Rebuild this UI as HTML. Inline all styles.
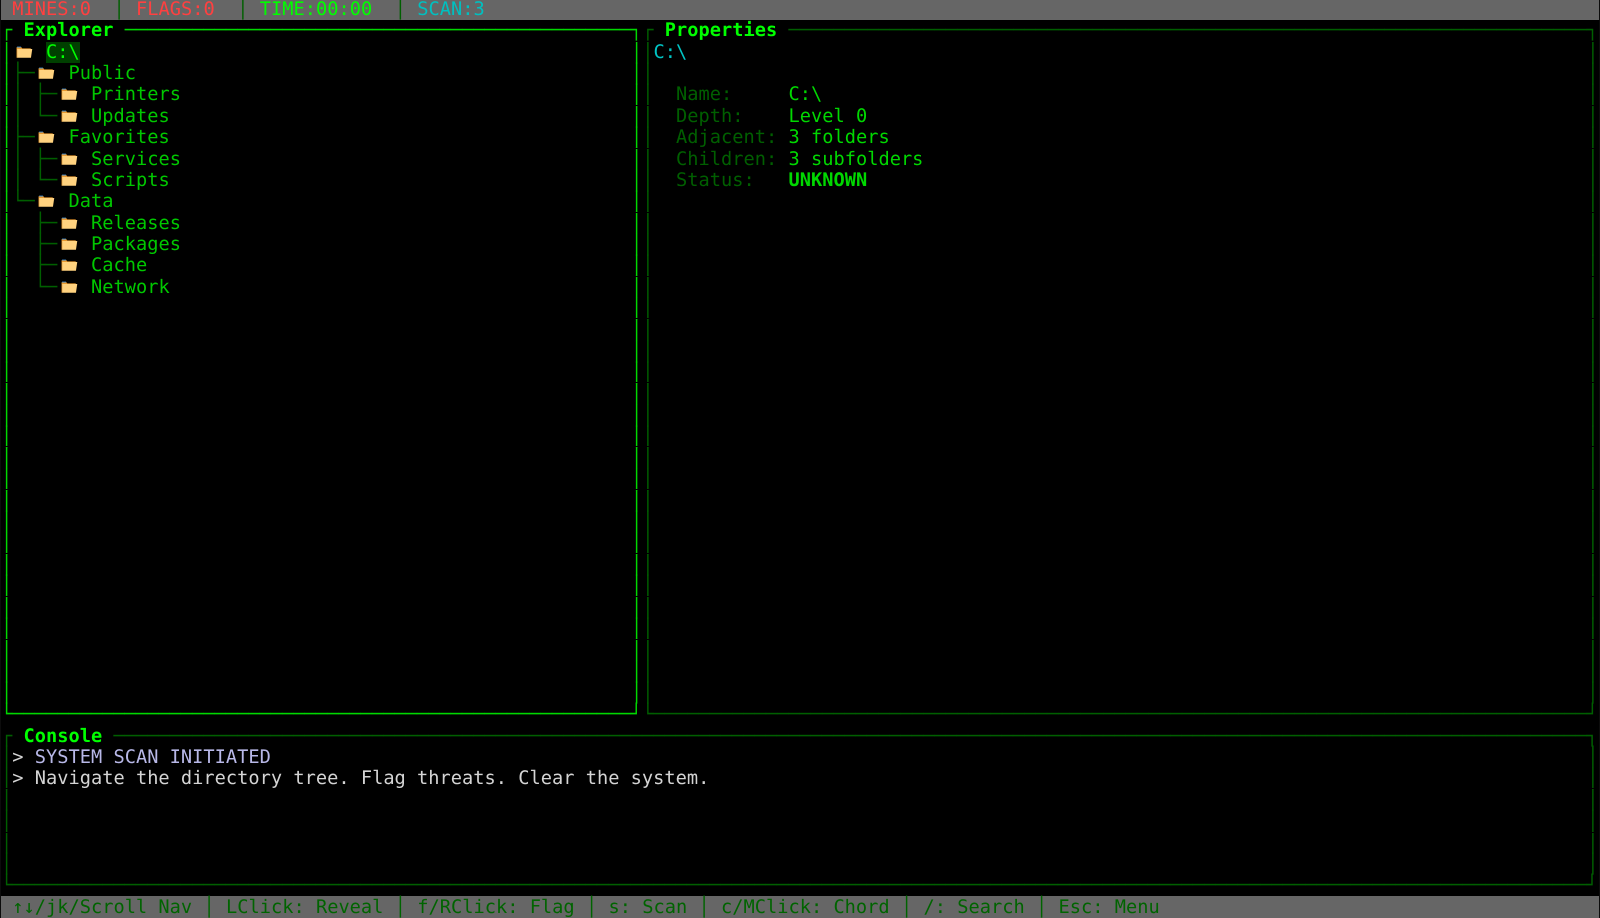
<!DOCTYPE html>
<html lang="en">
<head>
<meta charset="utf-8">
<title>Explorer</title>
<style>
html,body{margin:0;padding:0;width:1600px;height:918px;overflow:hidden;background:#0c0c0c}
#t{position:absolute;left:1px;top:0;width:1598px;height:918px;background:#000;overflow:hidden;font-family:"DejaVu Sans Mono","Liberation Mono",monospace;font-size:18.667px;line-height:21.35px;letter-spacing:.012px;white-space:pre;font-variant-ligatures:none;text-rendering:geometricPrecision}
#t span,#t div.c{position:absolute;left:calc(var(--c)*11.25px);top:calc(var(--r)*21.35px);height:21.35px}
#t div.c{height:auto}
#t span.u{margin-top:-1px}
.bar{position:absolute;left:0;width:1598px;background:#666}
.b{font-weight:bold}
.title{color:#0f0;font-weight:bold}
.hi{color:#00d800}
.lo{color:#005f00}
.tr{color:#005f00}
.n{color:#00c800}
.k{color:#005f00}
.v{color:#00d800}
.cy{color:#00c4c4}
svg.f{position:absolute;width:16.5px;height:12px;overflow:visible}
svg.g{position:absolute;top:0;width:8px;height:918px}
</style>
</head>
<body>
<svg width="0" height="0" style="position:absolute"><defs>
<symbol id="fd" viewBox="0 0 16 12"><path d="M0.3 1.2H5.2L6 2.4H14.5V4H1.2V11.7H0.3Z" fill="#e8982e"/><path d="M0.8 0.6H4.8V1.5H0.8Z" fill="#3f8fd8"/><path d="M1 3H16L14.7 11.7H1Z" fill="#ffd27f"/></symbol>
<symbol id="gp" viewBox="0 0 8 918"><path d="M0 41h8v1H0zM0 105h8v1H0zM0 148h8v1H0zM0 212h8v1H0zM0 276h8v1H0zM0 318h8v1H0zM0 382h8v1H0zM0 446h8v1H0zM0 489h8v1H0zM0 553h8v1H0zM0 596h8v1H0zM0 639h8v1H0z" fill="#000"/></symbol>
<symbol id="gc" viewBox="0 0 8 918"><path d="M0 788h8v1H0zM0 832h8v1H0z" fill="#000"/></symbol>
</defs></svg>
<div id="t">
<div class="bar" style="top:0;height:20px"></div>
<div class="bar" style="top:896px;height:22px"></div>

<span class="u" style="--c:1;--r:0;color:#ff4040">MINES:0</span>
<span class="u" style="--c:10;--r:0;color:#005f00">│</span>
<span class="u" style="--c:12;--r:0;color:#ff4040">FLAGS:0</span>
<span class="u" style="--c:21;--r:0;color:#005f00">│</span>
<span class="u" style="--c:23;--r:0;color:#00ff00">TIME:00:00</span>
<span class="u" style="--c:35;--r:0;color:#005f00">│</span>
<span class="u" style="--c:37;--r:0;color:#00c0c0">SCAN:3</span>

<span class="hi u" style="--c:0;--r:1">┌</span>
<span class="title u" style="--c:2;--r:1">Explorer</span>
<span class="hi u" style="--c:11;--r:1">─────────────────────────────────────────────┐</span>
<span class="lo u" style="--c:57;--r:1">┌</span>
<span class="title u" style="--c:59;--r:1">Properties</span>
<span class="lo u" style="--c:70;--r:1">───────────────────────────────────────────────────────────────────────┐</span>

<div class="c hi" style="--c:0;--r:2">│
│
│
│
│
│
│
│
│
│
│
│
│
│
│
│
│
│
│
│
│
│
│
│
│
│
│
│
│
│
│</div>
<div class="c hi" style="--c:56;--r:2">│
│
│
│
│
│
│
│
│
│
│
│
│
│
│
│
│
│
│
│
│
│
│
│
│
│
│
│
│
│
│</div>
<div class="c lo" style="--c:57;--r:2">│
│
│
│
│
│
│
│
│
│
│
│
│
│
│
│
│
│
│
│
│
│
│
│
│
│
│
│
│
│
│</div>
<div class="c lo" style="--c:141;--r:2">│
│
│
│
│
│
│
│
│
│
│
│
│
│
│
│
│
│
│
│
│
│
│
│
│
│
│
│
│
│
│</div>
<span class="hi u" style="--c:0;--r:33">└───────────────────────────────────────────────────────┘</span>
<span class="lo u" style="--c:57;--r:33">└───────────────────────────────────────────────────────────────────────────────────┘</span>

<svg class="f" style="left:15px;top:46px"><use href="#fd"/></svg>
<span class="u" style="--c:4;--r:2;color:#0f0;background:#004000">C:\</span>

<span class="tr u" style="--c:1;--r:3">├─</span>
<svg class="f" style="left:37px;top:67px"><use href="#fd"/></svg>
<span class="n u" style="--c:6;--r:3">Public</span>
<span class="tr u" style="--c:1;--r:4">│ ├─</span>
<svg class="f" style="left:59.6px;top:88px"><use href="#fd"/></svg>
<span class="n u" style="--c:8;--r:4">Printers</span>
<span class="tr u" style="--c:1;--r:5">│ └─</span>
<svg class="f" style="left:59.6px;top:110px"><use href="#fd"/></svg>
<span class="n u" style="--c:8;--r:5">Updates</span>
<span class="tr u" style="--c:1;--r:6">├─</span>
<svg class="f" style="left:37px;top:130.5px"><use href="#fd"/></svg>
<span class="n u" style="--c:6;--r:6">Favorites</span>
<span class="tr" style="--c:1;--r:7">│ ├─</span>
<svg class="f" style="left:59.6px;top:153px"><use href="#fd"/></svg>
<span class="n" style="--c:8;--r:7">Services</span>
<span class="tr u" style="--c:1;--r:8">│ └─</span>
<svg class="f" style="left:59.6px;top:173.5px"><use href="#fd"/></svg>
<span class="n u" style="--c:8;--r:8">Scripts</span>
<span class="tr u" style="--c:1;--r:9">└─</span>
<svg class="f" style="left:37px;top:194.5px"><use href="#fd"/></svg>
<span class="n u" style="--c:6;--r:9">Data</span>
<span class="tr u" style="--c:3;--r:10">├─</span>
<svg class="f" style="left:59.6px;top:216.5px"><use href="#fd"/></svg>
<span class="n u" style="--c:8;--r:10">Releases</span>
<span class="tr u" style="--c:3;--r:11">├─</span>
<svg class="f" style="left:59.6px;top:237.5px"><use href="#fd"/></svg>
<span class="n u" style="--c:8;--r:11">Packages</span>
<span class="tr u" style="--c:3;--r:12">├─</span>
<svg class="f" style="left:59.6px;top:258.5px"><use href="#fd"/></svg>
<span class="n u" style="--c:8;--r:12">Cache</span>
<span class="tr u" style="--c:3;--r:13">└─</span>
<svg class="f" style="left:59.6px;top:280.5px"><use href="#fd"/></svg>
<span class="n u" style="--c:8;--r:13">Network</span>

<span class="cy u" style="--c:58;--r:2">C:\</span>
<span class="k u" style="--c:60;--r:4">Name:</span><span class="v u" style="--c:70;--r:4">C:\</span>
<span class="k u" style="--c:60;--r:5">Depth:</span><span class="v u" style="--c:70;--r:5">Level 0</span>
<span class="k u" style="--c:60;--r:6">Adjacent:</span><span class="v u" style="--c:70;--r:6">3 folders</span>
<span class="k" style="--c:60;--r:7">Children:</span><span class="v" style="--c:70;--r:7">3 subfolders</span>
<span class="k u" style="--c:60;--r:8">Status:</span><span class="v b u" style="--c:70;--r:8">UNKNOWN</span>

<span class="lo" style="--c:0;--r:34">┌</span>
<span class="title" style="--c:2;--r:34">Console</span>
<span class="lo" style="--c:10;--r:34">───────────────────────────────────────────────────────────────────────────────────────────────────────────────────────────────────┐</span>
<div class="c lo" style="--c:0;--r:35">│
│
│
│
│
│</div>
<div class="c lo" style="--c:141;--r:35">│
│
│
│
│
│</div>
<span style="--c:1;--r:35;color:#d4d4d4">&gt;</span>
<span style="--c:3;--r:35;color:#b8b8e8">SYSTEM SCAN INITIATED</span>
<span class="u" style="--c:1;--r:36;color:#d4d4d4">&gt;</span>
<span class="u" style="--c:3;--r:36;color:#d4d4d4">Navigate the directory tree. Flag threats. Clear the system.</span>
<span class="lo" style="--c:0;--r:41">└────────────────────────────────────────────────────────────────────────────────────────────────────────────────────────────────────────────┘</span>

<span style="--c:1;--r:42;color:#006400">↑↓/jk/Scroll Nav</span>
<span style="--c:18;--r:42;color:#006400">│</span>
<span style="--c:20;--r:42;color:#006400">LClick: Reveal</span>
<span style="--c:35;--r:42;color:#006400">│</span>
<span style="--c:37;--r:42;color:#006400">f/RClick: Flag</span>
<span style="--c:52;--r:42;color:#006400">│</span>
<span style="--c:54;--r:42;color:#006400">s: Scan</span>
<span style="--c:62;--r:42;color:#006400">│</span>
<span style="--c:64;--r:42;color:#006400">c/MClick: Chord</span>
<span style="--c:80;--r:42;color:#006400">│</span>
<span style="--c:82;--r:42;color:#006400">/: Search</span>
<span style="--c:92;--r:42;color:#006400">│</span>
<span style="--c:94;--r:42;color:#006400">Esc: Menu</span>

<svg class="g" style="left:1.6px"><use href="#gp" width="8" height="918"/><use href="#gc" width="8" height="918"/></svg>
<svg class="g" style="left:631.6px"><use href="#gp" width="8" height="918"/></svg>
<svg class="g" style="left:642.85px"><use href="#gp" width="8" height="918"/></svg>
<svg class="g" style="left:1587.85px"><use href="#gp" width="8" height="918"/><use href="#gc" width="8" height="918"/></svg>
</div>
</body>
</html>
